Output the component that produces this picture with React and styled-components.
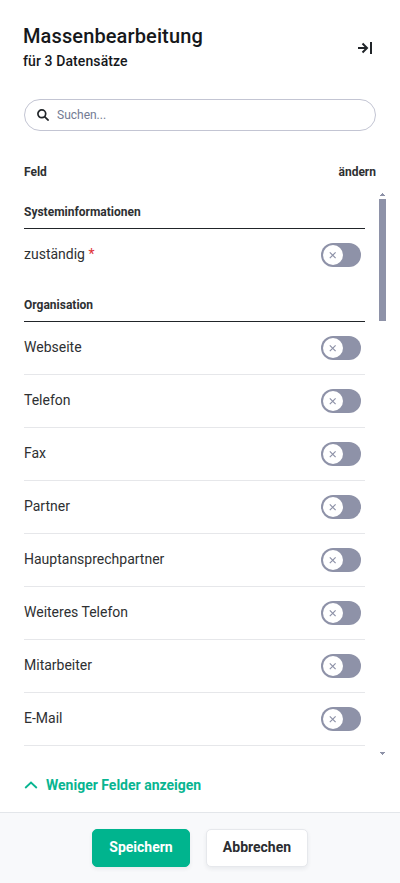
import React from "react";
import styled, { createGlobalStyle } from "styled-components";

const GlobalStyle = createGlobalStyle`
  * { box-sizing: border-box; }
  body { margin: 0; background: #fff; color: #2e3032; font-family: Roboto, sans-serif; }
  h1, h2, h3, p { margin: 0; }
  button, input { font-family: inherit; }
`;

const Panel = styled.main`
  width: 400px;
  height: 883px;
  display: flex;
  flex-direction: column;
  overflow: hidden;
`;

const Header = styled.header`
  height: 99px;
  padding: 24px 27px 0 23px;
  display: flex;
  justify-content: space-between;
  color: #16181b;
`;

const Title = styled.h1`
  font-size: 20px;
  line-height: 24px;
  font-weight: 500;
  letter-spacing: 0.12px;
`;

const Subtitle = styled.p`
  margin-top: 5px;
  font-size: 14px;
  line-height: 16px;
  font-weight: 500;
  letter-spacing: 0.1px;
`;

const CollapseButton = styled.button`
  width: 16px;
  height: 16px;
  margin-top: 16px;
  padding: 0;
  border: 0;
  background: none;
  color: #212529;
  svg { display: block; }
`;

const SearchBox = styled.label`
  flex: none;
  height: 32px;
  margin: 0 24px;
  padding: 0 12px;
  display: flex;
  align-items: center;
  gap: 8px;
  border: 1px solid #c3c5d3;
  border-radius: 16px;
  svg { flex: none; }
`;

const SearchInput = styled.input`
  flex: 1;
  min-width: 0;
  padding: 0;
  border: 0;
  outline: 0;
  font-size: 12px;
  line-height: 16px;
  background: transparent;
  &::placeholder { color: #737b93; opacity: 1; }
`;

const ColumnHeads = styled.div`
  height: 60px;
  padding: 33px 24px 0;
  display: flex;
  justify-content: space-between;
  font-size: 12px;
  line-height: 16px;
  font-weight: 700;
`;

const ScrollArea = styled.div`
  height: 567px;
  padding: 0 14px 0 24px;
  display: flex;
  justify-content: space-between;
`;

const Fields = styled.div`
  width: 341px;
`;

const Group = styled.section`
  & + & { margin-top: 1px; }
`;

const GroupTitle = styled.h2`
  height: ${(p) => (p.$first ? 38 : 39)}px;
  padding-top: ${(p) => (p.$first ? 13 : 14)}px;
  border-bottom: 1px solid #212529;
  font-size: 12px;
  line-height: 16px;
  font-weight: 700;
`;

const FieldRow = styled.div`
  height: 53px;
  padding-right: 4px;
  display: flex;
  align-items: center;
  justify-content: space-between;
  border-bottom: 1px solid ${(p) => (p.$plain ? "transparent" : "#e6e7ea")};
`;

const FieldLabel = styled.span`
  padding-bottom: 2px;
  font-size: 14px;
  line-height: 20px;
`;

const Required = styled.span`
  color: #e03137;
`;

const Toggle = styled.button`
  width: 40px;
  height: 24px;
  padding: 2px;
  border: 0;
  border-radius: 12px;
  background: #8e92a8;
`;

const Knob = styled.span`
  width: 20px;
  height: 20px;
  display: flex;
  align-items: center;
  justify-content: center;
  border-radius: 50%;
  background: #fff;
`;

const ScrollBar = styled.div`
  width: 7px;
  padding: 2px 0 3px;
  display: flex;
  flex-direction: column;
  align-items: center;
  justify-content: space-between;
  svg { display: block; }
`;

const ScrollThumb = styled.div`
  width: 7px;
  height: 122px;
  margin: 3px 0 auto;
  background: #8e92a8;
`;

const FewerFields = styled.button`
  height: 54px;
  padding: 0 24px;
  display: flex;
  align-items: center;
  gap: 8px;
  border: 0;
  background: none;
  color: #08b591;
  font-size: 14px;
  line-height: 20px;
  font-weight: 700;
`;

const Footer = styled.footer`
  height: 71px;
  padding-top: 16px;
  display: flex;
  justify-content: center;
  align-items: flex-start;
  gap: 16px;
  border-top: 1px solid #e3e6ea;
  background: #f8f9fb;
`;

const ActionButton = styled.button`
  width: ${(p) => (p.$primary ? 98 : 102)}px;
  height: 38px;
  padding: 0 0 2px;
  border: 1px solid ${(p) => (p.$primary ? "#00b48e" : "#e6e8ec")};
  border-radius: 5px;
  background: ${(p) => (p.$primary ? "#00b48e" : "#fff")};
  color: ${(p) => (p.$primary ? "#fff" : "#2b2d30")};
  font-size: 14px;
  line-height: 20px;
  font-weight: 700;
  box-shadow: 0 2px 4px rgba(30, 40, 60, 0.07);
`;

const groups = [
  { title: "Systeminformationen", fields: [{ name: "zuständig", required: true }] },
  {
    title: "Organisation",
    fields: [
      { name: "Webseite" },
      { name: "Telefon" },
      { name: "Fax" },
      { name: "Partner" },
      { name: "Hauptansprechpartner" },
      { name: "Weiteres Telefon" },
      { name: "Mitarbeiter" },
      { name: "E-Mail" },
    ],
  },
];

function Switch({ label }) {
  return (
    <Toggle type="button" role="switch" aria-checked="false" aria-label={label}>
      <Knob>
        <svg width="8" height="8" viewBox="0 0 8 8" fill="none" stroke="#8e92a8" strokeWidth="1.2">
          <path d="M.8 1.3l5.8 5.8M6.6 1.3L.8 7.1" />
        </svg>
      </Knob>
    </Toggle>
  );
}

export default function App() {
  return (
    <>
      <GlobalStyle />
      <Panel>
        <Header>
          <div>
            <Title>Massenbearbeitung</Title>
            <Subtitle>für 3 Datensätze</Subtitle>
          </div>
          <CollapseButton aria-label="Schließen">
            <svg width="16" height="16" viewBox="0 0 16 16" fill="none" stroke="currentColor" strokeWidth="2">
              <path d="M1 8h9M5.5 3.5L10 8l-4.5 4.5M14 2v12" />
            </svg>
          </CollapseButton>
        </Header>
        <SearchBox>
          <svg width="12" height="12" viewBox="0 0 12 12" fill="none" stroke="#212529" strokeWidth="1.7">
            <circle cx="4.8" cy="4.8" r="3.9" />
            <path d="M7.6 7.6l4 4" />
          </svg>
          <SearchInput placeholder="Suchen..." />
        </SearchBox>
        <ColumnHeads>
          <span>Feld</span>
          <span>ändern</span>
        </ColumnHeads>
        <ScrollArea>
          <Fields>
            {groups.map((group, i) => (
              <Group key={group.title}>
                <GroupTitle $first={i === 0}>{group.title}</GroupTitle>
                {group.fields.map((field) => (
                  <FieldRow key={field.name} $plain={i === 0}>
                    <FieldLabel>
                      {field.name}
                      {field.required && <Required> *</Required>}
                    </FieldLabel>
                    <Switch label={field.name} />
                  </FieldRow>
                ))}
              </Group>
            ))}
          </Fields>
          <ScrollBar>
            <svg width="5" height="3" viewBox="0 0 5 3" fill="#8e92a8">
              <path d="M0 3V2h1V1h1V0h1v1h1v1h1v1z" />
            </svg>
            <ScrollThumb />
            <svg width="5" height="3" viewBox="0 0 5 3" fill="#8e92a8">
              <path d="M0 0v1h1v1h1v1h1V2h1V1h1V0z" />
            </svg>
          </ScrollBar>
        </ScrollArea>
        <FewerFields>
          <svg width="14" height="8" viewBox="0 0 14 8" fill="none" stroke="currentColor" strokeWidth="1.8">
            <path d="M1.2 7L7 1.5 12.8 7" />
          </svg>
          Weniger Felder anzeigen
        </FewerFields>
        <Footer>
          <ActionButton $primary>Speichern</ActionButton>
          <ActionButton>Abbrechen</ActionButton>
        </Footer>
      </Panel>
    </>
  );
}
